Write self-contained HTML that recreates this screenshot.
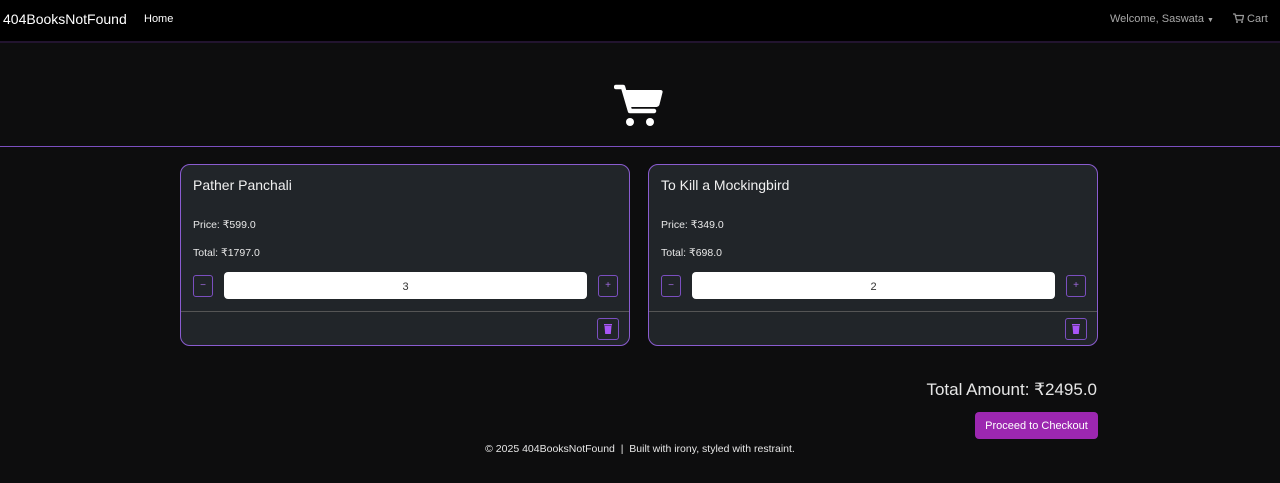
<!DOCTYPE html>
<html><head><meta charset="utf-8"><style>
*{box-sizing:border-box;margin:0;padding:0}
body{width:1280px;height:483px;background:#0d0d0e;font-family:"Liberation Sans",sans-serif;color:#fff;position:relative;overflow:hidden}
.nav{position:absolute;left:0;top:0;width:1280px;height:43px;background:#000;border-bottom:2px solid #22142f}
.brand{position:absolute;left:3px;top:11px;font-size:14px;color:#fff}
.home{position:absolute;left:144px;top:13px;font-size:11px;color:#fff}
.welcome{position:absolute;left:1110px;top:13px;font-size:11px;color:#a8a8a8}
.cartl{position:absolute;left:1233px;top:13px;font-size:11px;color:#a8a8a8}
.hr{position:absolute;left:0;top:146px;width:1280px;height:1px;background:#7b4fc0}
.card{position:absolute;top:164px;width:450px;height:182px;background:#212529;border:1px solid #8a5cd0;border-radius:10px}
.title{position:absolute;left:12px;top:12px;font-size:14px;color:#f0f0f0}
.p{position:absolute;left:12px;font-size:10.5px;color:#e8e8e8}
.btn{position:absolute;width:20px;height:22px;border:1px solid #7b4fc0;border-radius:3px;color:#a06ae0;font-size:10px;text-align:center;line-height:20px}
.inp{position:absolute;left:43px;top:107px;width:363px;height:27px;background:#fff;border-radius:4px;color:#333;font-size:11px;text-align:center;line-height:30px}
.div{position:absolute;left:0;top:146px;width:448px;height:1px;background:#555}
.trash{position:absolute;left:416px;top:153px;width:22px;height:22px;border:1px solid #7b4fc0;border-radius:3px}
.tot{position:absolute;right:183px;top:380px;font-size:17px;color:#e6e6e6}
.chk{position:absolute;left:975px;top:412px;width:123px;height:27px;background:#9c27b0;border-radius:4px;font-size:11px;text-align:center;line-height:29px;color:#fff}
.foot{position:absolute;left:0;width:1280px;top:443px;text-align:center;font-size:10.5px;color:#e6e6e6}
</style></head><body>
<div class="nav">
<div class="brand">404BooksNotFound</div>
<div class="home">Home</div>
<div class="welcome">Welcome, Saswata <span style="font-size:7px">▼</span></div>
<div class="cartl"><svg width="11" height="10" viewBox="0 0 11 10" style="vertical-align:-1px"><path d="M0 1h2l1.5 6h6l1-4.5H3" fill="none" stroke="#999" stroke-width="1.3"/><circle cx="4" cy="9" r="1" fill="#999"/><circle cx="9" cy="9" r="1" fill="#999"/></svg> Cart</div>
</div>
<svg style="position:absolute;left:614px;top:84px" width="50" height="44" viewBox="0 0 50 44">
<path d="M2 3h7l7 24h24" fill="none" stroke="#fff" stroke-width="4.5" stroke-linecap="round" stroke-linejoin="round"/>
<path d="M10 6h36.5c1.5 0 2.5 1 2 2.5l-3 12c-.5 1.8-2 2.5-3.5 2.5H15z" fill="#fff"/>
<circle cx="16" cy="38" r="4" fill="#fff"/><circle cx="36" cy="38" r="4" fill="#fff"/>
</svg>
<div class="hr"></div>

<div class="card" style="left:180px">
<div class="title">Pather Panchali</div>
<div class="p" style="top:54px">Price: ₹599.0</div>
<div class="p" style="top:82px">Total: ₹1797.0</div>
<div class="btn" style="left:12px;top:110px">−</div>
<div class="inp">3</div>
<div class="btn" style="left:417px;top:110px">+</div>
<div class="div"></div>
<div class="trash"><svg width="20" height="20" viewBox="0 0 20 20"><rect x="6" y="5" width="8" height="1.5" fill="#a855f7"/><path d="M6.5 7h7l-.7 8h-5.6z" fill="#a855f7"/></svg></div>
</div>

<div class="card" style="left:648px">
<div class="title">To Kill a Mockingbird</div>
<div class="p" style="top:54px">Price: ₹349.0</div>
<div class="p" style="top:82px">Total: ₹698.0</div>
<div class="btn" style="left:12px;top:110px">−</div>
<div class="inp">2</div>
<div class="btn" style="left:417px;top:110px">+</div>
<div class="div"></div>
<div class="trash"><svg width="20" height="20" viewBox="0 0 20 20"><rect x="6" y="5" width="8" height="1.5" fill="#a855f7"/><path d="M6.5 7h7l-.7 8h-5.6z" fill="#a855f7"/></svg></div>
</div>

<div class="tot">Total Amount: ₹2495.0</div>
<div class="chk">Proceed to Checkout</div>
<div class="foot">© 2025 404BooksNotFound &nbsp;|&nbsp; Built with irony, styled with restraint.</div>
</body></html>
